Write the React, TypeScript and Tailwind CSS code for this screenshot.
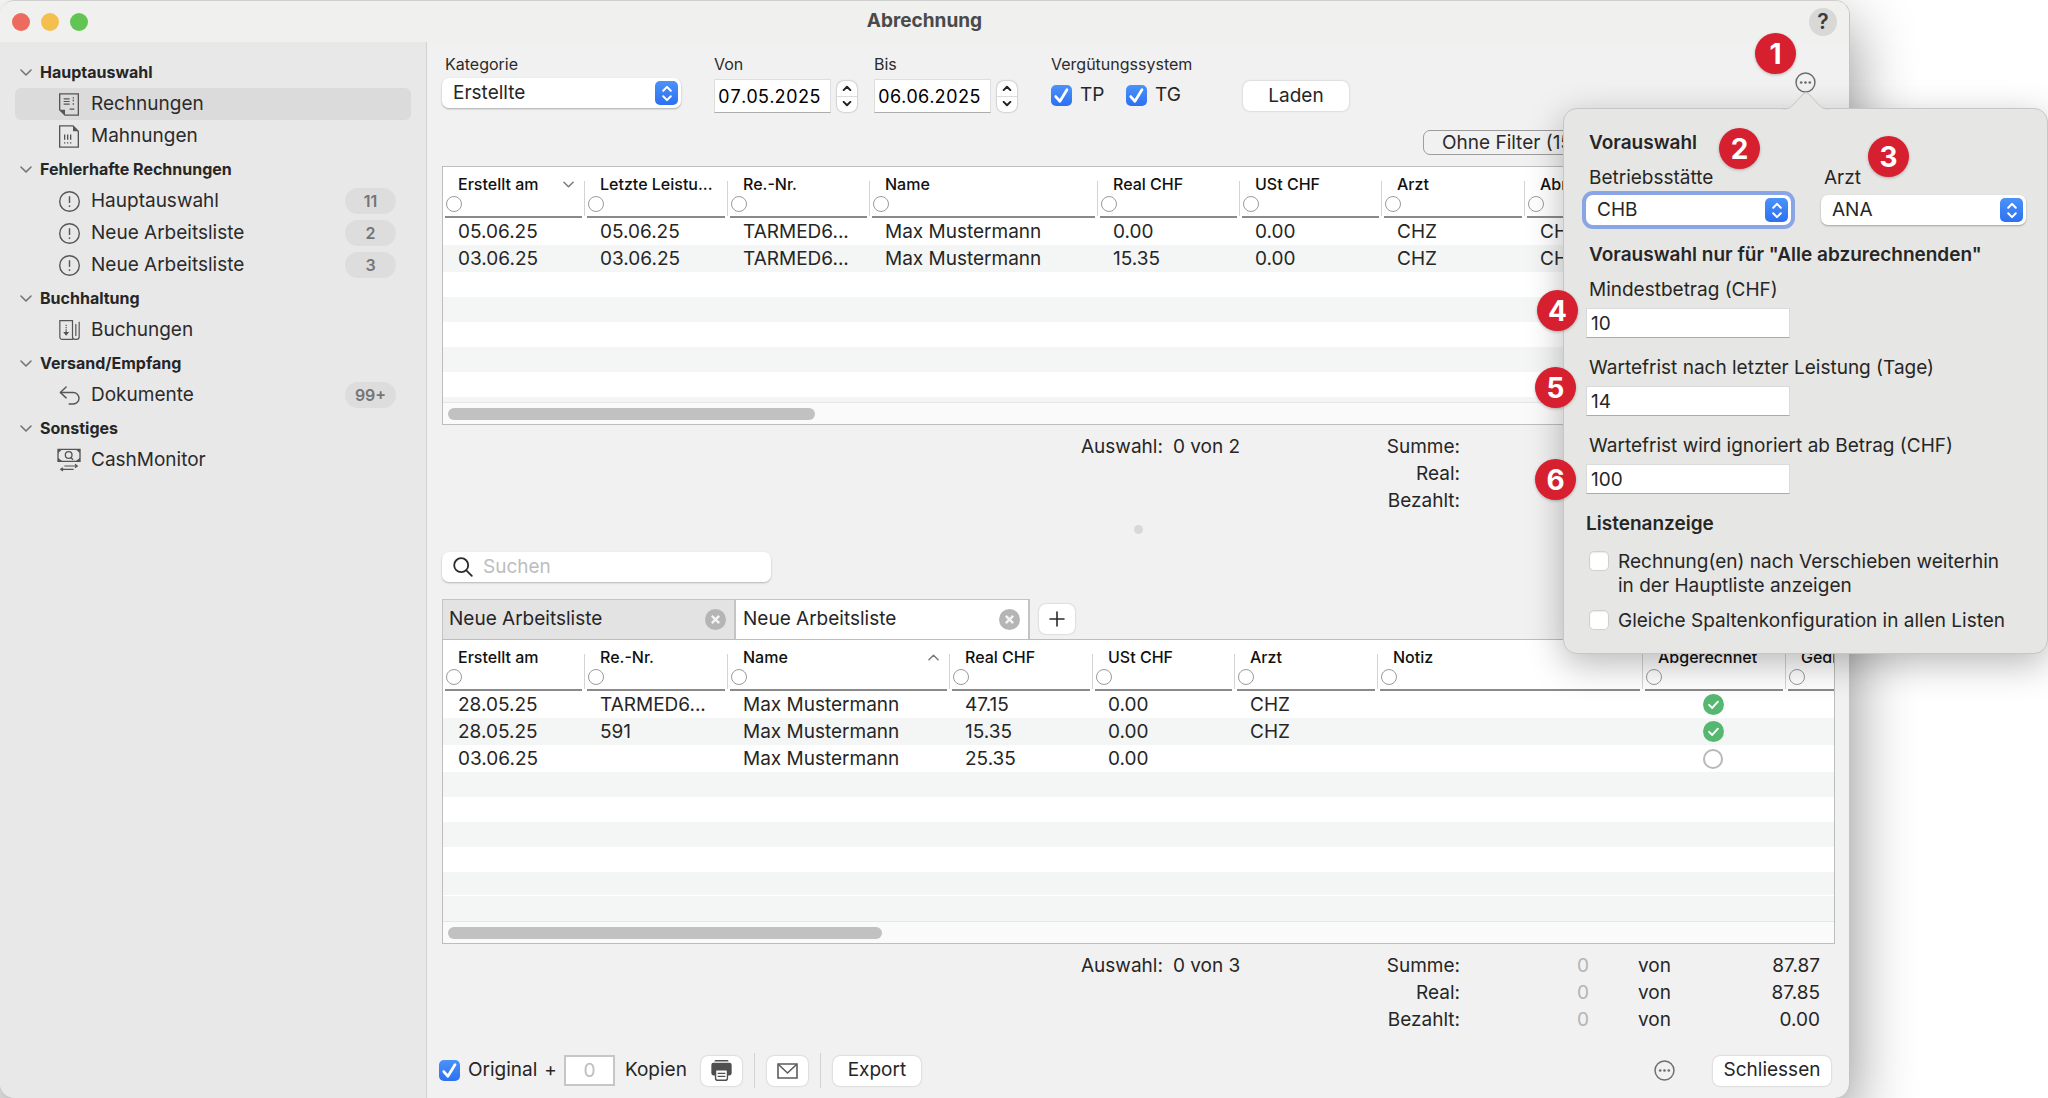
import React from "react";

const ROW_TEXT = "text-[19px] leading-[27px]";

type Column = { label: string; width?: string; sort?: "up" | "down" };

function Chevron({ dir = "down", className = "" }: { dir?: "up" | "down"; className?: string }) {
  return (
    <svg viewBox="0 0 12 7" className={className} fill="none" stroke="currentColor" strokeWidth="1.6" strokeLinecap="round" strokeLinejoin="round" aria-hidden="true">
      <path d={dir === "down" ? "M1 1l5 5 5-5" : "M1 6l5-5 5 5"} />
    </svg>
  );
}

function InvoiceIcon() {
  return (
    <svg viewBox="0 0 60 68" className="h-[23px] w-5" fill="none" stroke="currentColor" strokeWidth="4" aria-hidden="true">
      <path d="M2 50V2h56v64H18z" />
      <path d="M2 50h16v16z" fill="currentColor" stroke="none" />
      <path d="M14 17h18M14 25h18M14 33h18M32 48h14" strokeWidth="3.5" />
      <path d="M43 12v4M43 20v4M43 30v5" strokeWidth="4" />
    </svg>
  );
}

function ReminderIcon() {
  return (
    <svg viewBox="0 0 60 68" className="h-[23px] w-5" fill="none" stroke="currentColor" strokeWidth="4" aria-hidden="true">
      <path d="M42 2H2v64h56V18z" />
      <path d="M42 2v16h16z" fill="currentColor" stroke="none" />
      <path d="M17 28v16M26 28v16M35 28v16" strokeWidth="4" />
      <path d="M17 51v4M26 51v4M35 51v4" strokeWidth="4" />
    </svg>
  );
}

function AlertIcon() {
  return (
    <svg viewBox="0 0 60 60" className="size-[21px]" fill="none" stroke="currentColor" strokeWidth="4" aria-hidden="true">
      <circle cx="30" cy="30" r="28" />
      <path d="M30 15v19" />
      <circle cx="30" cy="43" r="2.6" fill="currentColor" stroke="none" />
    </svg>
  );
}

function BookingIcon() {
  return (
    <svg viewBox="0 0 62 60" className="h-5 w-[21px]" fill="none" stroke="currentColor" strokeWidth="3.6" aria-hidden="true">
      <path d="M42 58H9a7 7 0 0 1-7-7V2h38v48a8 8 0 0 0 8 8h4a8 8 0 0 0 8-8V5" />
      <path d="M50 12v36" />
      <path d="M21 14v4M21 21v4M21 28v4" />
      <path d="M21 33v12" />
      <path d="M12 36l9 11 9-11z" fill="currentColor" stroke="none" />
    </svg>
  );
}

function ReturnIcon() {
  return (
    <svg viewBox="0 0 60 56" className="h-[19px] w-[21px]" fill="none" stroke="currentColor" strokeWidth="4.2" strokeLinecap="round" strokeLinejoin="round" aria-hidden="true">
      <path d="M20 3L3 19l17 16" />
      <path d="M4 19h37a16.500 16.500 0 0 1 0 34H29" />
    </svg>
  );
}

function CashIcon() {
  return (
    <svg viewBox="0 0 72 70" className="h-6 w-6" fill="none" stroke="currentColor" strokeWidth="4" aria-hidden="true">
      <path d="M3 3h66v36H3z" />
      <path d="M3 3h13L3 15zM69 3H56l13 12zM3 39h13L3 28zM69 39H56l13-11z" fill="currentColor" stroke="none" />
      <circle cx="35" cy="20" r="10" />
      <path d="M41 27l7 7" />
      <path d="M22 53h38M54 48l7 5-7 5M50 63H12M18 58l-7 5 7 5" strokeWidth="3.4" />
    </svg>
  );
}

function EllipsisCircle() {
  return (
    <svg viewBox="0 0 20 20" className="size-[21px] text-[#6e6e6e]" aria-hidden="true">
      <circle cx="10" cy="10" r="9" fill="none" stroke="currentColor" strokeWidth="1.4" />
      <circle cx="5.900" cy="10" r="1.300" fill="currentColor" />
      <circle cx="10" cy="10" r="1.300" fill="currentColor" />
      <circle cx="14.100" cy="10" r="1.300" fill="currentColor" />
    </svg>
  );
}

function SideGroup({ title, first = false, children }: { title: string; first?: boolean; children: React.ReactNode }) {
  return (
    <section className={first ? "" : "mt-px"}>
      <h2>
        <button className="flex h-8 items-center gap-2 pl-[5px] text-[16px] font-bold text-[#262626]">
          <Chevron className="h-[7px] w-3 text-[#757575]" />
          {title}
        </button>
      </h2>
      <ul>{children}</ul>
    </section>
  );
}

function SideItem({ icon, label, count, active = false }: { icon: React.ReactNode; label: string; count?: string; active?: boolean }) {
  return (
    <li>
      <a href="#" className={`flex h-8 items-center rounded-md pr-[15px] pl-[42px] text-[19px] text-[#2b2b2b] ${active ? "bg-[#dbdbdb]" : ""}`}>
        <span className="mr-[10px] flex w-6 justify-center text-[#555]">{icon}</span>
        {label}
        {count && (
          <span className="ml-auto flex h-[26px] w-[51px] items-center justify-center rounded-full bg-[#dddddd] text-[16px] font-semibold text-[#757575]">{count}</span>
        )}
      </a>
    </li>
  );
}

function PopupSelect({ id, value, className = "", focused = false }: { id: string; value: string; className?: string; focused?: boolean }) {
  return (
    <div className={`relative ${className}`}>
      <select
        id={id}
        className={`h-[30px] w-full appearance-none rounded-[7px] bg-white pl-[11px] text-[19px] text-[#262626] outline-none ${focused ? "ring-4 ring-[#8aa5e6]" : "shadow-[0_1px_2px_rgba(0,0,0,0.3)]"}`}
      >
        <option>{value}</option>
      </select>
      <span className="pointer-events-none absolute top-[3px] right-[3px] flex h-6 w-[23px] items-center justify-center rounded-[5px] bg-gradient-to-b from-[#4b92f8] to-[#2d70f2]">
        <svg viewBox="0 0 12 18" className="h-[17px] w-3" fill="none" stroke="white" strokeWidth="2.200" strokeLinecap="round" strokeLinejoin="round" aria-hidden="true">
          <path d="M2 6l4-4 4 4M2 12l4 4 4-4" />
        </svg>
      </span>
    </div>
  );
}

function DateField({ id, label, value }: { id: string; label: string; value: string }) {
  return (
    <div>
      <label htmlFor={id} className="block text-[16px] leading-5">{label}</label>
      <div className="mt-1 flex h-9 items-center gap-[6px]">
        <input id={id} defaultValue={value} className="h-[34px] w-[117px] border border-[#dedede] border-b-[#adadad] bg-white pl-[3px] text-[18px] text-black tabular-nums outline-none" />
        <span className="flex h-[31px] w-5 flex-col overflow-hidden rounded-[7px] bg-white shadow-[0_0_2px_rgba(0,0,0,0.4)]">
          <button aria-label={`${label} erhöhen`} className="flex flex-1 items-center justify-center border-b border-[#dcdcdc]">
            <svg viewBox="0 0 12 7" className="h-[6px] w-[10px]" fill="none" stroke="#222" strokeWidth="2.400" strokeLinecap="round" strokeLinejoin="round"><path d="M2 6l4-4 4 4" /></svg>
          </button>
          <button aria-label={`${label} verringern`} className="flex flex-1 items-center justify-center">
            <svg viewBox="0 0 12 7" className="h-[6px] w-[10px]" fill="none" stroke="#222" strokeWidth="2.400" strokeLinecap="round" strokeLinejoin="round"><path d="M2 1l4 4 4-4" /></svg>
          </button>
        </span>
      </div>
    </div>
  );
}

function Check({ label, className = "" }: { label: string; className?: string }) {
  return (
    <label className={`flex items-center gap-2 text-[19px] text-[#262626] ${className}`}>
      <span className="grid size-[21px] place-items-center">
        <input type="checkbox" defaultChecked className="peer col-start-1 row-start-1 size-full appearance-none rounded-[5px] bg-white checked:bg-gradient-to-b checked:from-[#4b92f8] checked:to-[#2d70f2]" />
        <svg viewBox="0 0 20 20" className="pointer-events-none col-start-1 row-start-1 size-full opacity-0 peer-checked:opacity-100" fill="none" stroke="white" strokeWidth="2.600" strokeLinecap="round" strokeLinejoin="round" aria-hidden="true">
          <path d="M4.500 11l4 4.500L15.200 4.500" />
        </svg>
      </span>
      {label}
    </label>
  );
}

function PushButton({ children, className = "", label }: { children: React.ReactNode; className?: string; label?: string }) {
  return (
    <button aria-label={label} className={`flex h-[30px] items-center justify-center rounded-[7px] bg-white text-[19px] text-[#262626] shadow-[0_0_2px_rgba(0,0,0,0.25)] ${className}`}>
      {children}
    </button>
  );
}

function ListTable({ columns, rows, fillers, thumb }: { columns: Column[]; rows: React.ReactNode[][]; fillers: string[]; thumb: string }) {
  return (
    <div className="overflow-hidden border border-[#bdbdbd] bg-white">
      <table className="w-full table-fixed border-collapse">
        <colgroup>
          {columns.map((c, i) => (
            <col key={i} className={c.width} />
          ))}
        </colgroup>
        <thead>
          <tr className="h-[51px]">
            {columns.map((c, i) => (
              <th key={i} className="p-0 text-left align-top font-medium">
                <div className="flex h-[51px]">
                  <div className="ml-[2px] flex min-w-0 flex-1 flex-col border-b-2 border-[#8a8a8a]">
                    <div className="mt-[6px] flex items-center pl-[13px]">
                      <span className="overflow-hidden text-[16px] leading-[22px] whitespace-nowrap text-[#111]">{c.label}</span>
                      {c.sort && <Chevron dir={c.sort} className="mr-2 ml-auto h-[7px] w-[11px] shrink-0 text-[#7a7a7a]" />}
                    </div>
                    <button aria-label={`Filter ${c.label}`} className="mt-px ml-px size-4 rounded-full border border-[#9a9a9a] bg-white" />
                  </div>
                  {i < columns.length - 1 && <span className="mt-[14px] mb-[2px] ml-[2px] w-px bg-[#d4d4d4]" />}
                </div>
              </th>
            ))}
          </tr>
        </thead>
        <tbody>
          {rows.map((r, i) => (
            <tr key={i} className="h-[27px] even:bg-[#f4f5f5]">
              {r.map((cell, j) => (
                <td key={j} className={`overflow-hidden p-0 pl-[15px] text-[#262626] ${ROW_TEXT}`}>
                  <div className="whitespace-nowrap">{cell}</div>
                </td>
              ))}
            </tr>
          ))}
          {fillers.map((f, i) => (
            <tr key={`f${i}`} className={f}>
              <td colSpan={columns.length} className="p-0" />
            </tr>
          ))}
        </tbody>
      </table>
      <div className="flex h-[22px] items-center border-t border-[#e6e6e6] bg-[#fafafa] px-[5px]">
        <div className={`h-3 rounded-full bg-[#c1c1c1] ${thumb}`} />
      </div>
    </div>
  );
}

function Totals({ selection, values }: { selection: string; values?: string[] }) {
  const labels = ["Summe:", "Real:", "Bezahlt:"];
  return (
    <div className={`mt-2 flex justify-end pr-[15px] text-[#262626] ${ROW_TEXT}`}>
      <div className="flex w-[281px] gap-[10px]">
        <span>Auswahl:</span>
        <span>{selection}</span>
      </div>
      <dl className="w-[458px]">
        {labels.map((l, i) => (
          <div key={l} className="grid grid-cols-[98px_129px_82px_149px] text-right">
            <dt>{l}</dt>
            {values && (
              <>
                <dd className="text-[#b4b4b4]">0</dd>
                <dd>von</dd>
                <dd>{values[i]}</dd>
              </>
            )}
          </div>
        ))}
      </dl>
    </div>
  );
}

function ListTab({ active = false }: { active?: boolean }) {
  return (
    <div className={`flex w-[294px] items-center justify-between border-t border-r-2 border-[#c4c4c4] pr-2 ${active ? "bg-white pl-[7px]" : "border-l bg-[#e3e3e3] pl-[6px]"}`}>
      <button className="text-[19px] text-[#262626]">Neue Arbeitsliste</button>
      <button aria-label="Liste schliessen">
        <svg viewBox="0 0 20 20" className="size-[21px]" aria-hidden="true">
          <circle cx="10" cy="10" r="10" fill="#b5b5b5" />
          <path d="M6.500 6.500l7 7M13.500 6.500l-7 7" stroke="#f4f4f4" strokeWidth="2.200" />
        </svg>
      </button>
    </div>
  );
}

function StatusDone() {
  return (
    <svg viewBox="0 0 20 20" className="size-[21px]" aria-label="Abgerechnet">
      <circle cx="10" cy="10" r="10" fill="#56b870" />
      <path d="M5.800 10.300l3 3 5.400-6" fill="none" stroke="white" strokeWidth="1.800" strokeLinecap="round" strokeLinejoin="round" />
    </svg>
  );
}

function StatusOpen() {
  return <span className="block size-5 rounded-full border-2 border-[#b8b8b8] bg-white" />;
}

const Centered = ({ children }: { children: React.ReactNode }) => <div className="flex justify-center pr-[18px]">{children}</div>;

function Marker({ n, className }: { n: number; className: string }) {
  return (
    <span className={`absolute flex size-[41px] items-center justify-center rounded-full bg-[#d6202f] text-[28px] font-bold text-white shadow-[0_1px_3px_rgba(0,0,0,0.25)] ${className}`}>{n}</span>
  );
}

function NumberField({ id, label, value }: { id: string; label: string; value: string }) {
  return (
    <div>
      <label htmlFor={id} className="block pl-[3px] leading-6">{label}</label>
      <input id={id} defaultValue={value} className="mt-[6px] block h-[30px] w-[204px] border border-[#dadada] border-b-[#ababab] bg-white pl-1 text-[19px] outline-none" />
    </div>
  );
}

function OptionRow({ children }: { children: React.ReactNode }) {
  return (
    <label className="flex items-start gap-[9px] pl-[3px] leading-6">
      <input type="checkbox" className="mt-px size-5 shrink-0 appearance-none rounded-[5px] border border-[#d0d0d0] bg-white shadow-[inset_0_1px_1px_rgba(0,0,0,0.08)]" />
      <span>{children}</span>
    </label>
  );
}

function PresetPopover() {
  return (
    <div role="dialog" aria-label="Vorauswahl" className="absolute top-[108px] right-0 z-20 w-[485px] rounded-[14px] border border-[#c6c6c5] bg-[#e6e6e4] pt-[22px] pb-5 pl-[22px] text-[19px] text-[#262626] shadow-[0_10px_36px_rgba(0,0,0,0.28)]">
      <svg viewBox="0 0 46 19" className="absolute -top-[18px] left-[219px] h-[19px] w-[46px]" aria-hidden="true">
        <path d="M0 19C7 18 9 15 12 12L20 3Q23 0 26 3L34 12C37 15 39 18 46 19Z" fill="#e6e6e4" />
        <path d="M0 18C7 18 9 15 12 12L20 3Q23 0 26 3L34 12C37 15 39 18 46 18" fill="none" stroke="#c6c6c5" />
      </svg>
      <h2 className="pl-[3px] leading-6 font-semibold">Vorauswahl</h2>
      <div className="mt-[11px] flex gap-[30px]">
        <div>
          <label htmlFor="site" className="block pl-[3px] leading-6">Betriebsstätte</label>
          <PopupSelect id="site" value="CHB" focused className="mt-[5px] w-[205px]" />
        </div>
        <div>
          <label htmlFor="doctor" className="block pl-[3px] leading-6">Arzt</label>
          <PopupSelect id="doctor" value="ANA" className="mt-[5px] w-[205px]" />
        </div>
      </div>
      <h2 className="mt-[18px] pl-[3px] leading-6 font-semibold">Vorauswahl nur für "Alle abzurechnenden"</h2>
      <div className="mt-[11px] flex flex-col gap-[18px]">
        <NumberField id="min" label="Mindestbetrag (CHF)" value="10" />
        <NumberField id="wait" label="Wartefrist nach letzter Leistung (Tage)" value="14" />
        <NumberField id="ignore" label="Wartefrist wird ignoriert ab Betrag (CHF)" value="100" />
      </div>
      <h2 className="mt-[18px] leading-6 font-semibold">Listenanzeige</h2>
      <div className="mt-[14px] flex flex-col gap-[11px]">
        <OptionRow>
          Rechnung(en) nach Verschieben weiterhin
          <br />
          in der Hauptliste anzeigen
        </OptionRow>
        <OptionRow>Gleiche Spaltenkonfiguration in allen Listen</OptionRow>
      </div>
    </div>
  );
}

const mainColumns: Column[] = [
  { label: "Erstellt am", width: "w-[142px]", sort: "down" },
  { label: "Letzte Leistu...", width: "w-[143px]" },
  { label: "Re.-Nr.", width: "w-[142px]" },
  { label: "Name", width: "w-[228px]" },
  { label: "Real CHF", width: "w-[142px]" },
  { label: "USt CHF", width: "w-[142px]" },
  { label: "Arzt", width: "w-[143px]" },
  { label: "Abr." },
];

const workColumns: Column[] = [
  { label: "Erstellt am", width: "w-[142px]" },
  { label: "Re.-Nr.", width: "w-[143px]" },
  { label: "Name", width: "w-[222px]", sort: "up" },
  { label: "Real CHF", width: "w-[143px]" },
  { label: "USt CHF", width: "w-[142px]" },
  { label: "Arzt", width: "w-[143px]" },
  { label: "Notiz" },
  { label: "Abgerechnet", width: "w-[143px]" },
  { label: "Gedruckt", width: "w-12" },
];

export default function App() {
  return (
    <div className="relative min-h-screen overflow-hidden bg-white pr-[198px] font-['Inter','Liberation_Sans',sans-serif] text-[#2b2b2b]">
      <div className="flex min-h-screen flex-col overflow-hidden rounded-[15px] border-t border-r border-t-[#cfcfcd] border-r-[#c4c4c4] bg-[#f1f1f1] shadow-[0_24px_64px_rgba(0,0,0,0.46)]">
        <header className="flex h-[41px] items-center justify-between bg-[#f0f0ee] pr-3 pl-3">
          <div className="flex w-28 gap-[11px]">
            <button aria-label="Fenster schliessen" className="size-[18px] rounded-full bg-[#ed6a5e]" />
            <button aria-label="Minimieren" className="size-[18px] rounded-full bg-[#f5bf4f]" />
            <button aria-label="Vergrössern" className="size-[18px] rounded-full bg-[#61c554]" />
          </div>
          <h1 className="text-[19px] font-bold text-[#4a4a4a]">Abrechnung</h1>
          <div className="flex w-28 justify-end">
            <button aria-label="Hilfe" className="flex size-7 items-center justify-center rounded-full bg-[#d8d8d6] text-[21px] font-semibold text-[#3c3c3c]">?</button>
          </div>
        </header>

        <div className="flex flex-1">
          <nav className="w-[427px] shrink-0 border-r border-[#d2d2d2] bg-[#e8e8e8] px-[15px] pt-[14px]">
            <SideGroup title="Hauptauswahl" first>
              <SideItem icon={<InvoiceIcon />} label="Rechnungen" active />
              <SideItem icon={<ReminderIcon />} label="Mahnungen" />
            </SideGroup>
            <SideGroup title="Fehlerhafte Rechnungen">
              <SideItem icon={<AlertIcon />} label="Hauptauswahl" count="11" />
              <SideItem icon={<AlertIcon />} label="Neue Arbeitsliste" count="2" />
              <SideItem icon={<AlertIcon />} label="Neue Arbeitsliste" count="3" />
            </SideGroup>
            <SideGroup title="Buchhaltung">
              <SideItem icon={<BookingIcon />} label="Buchungen" />
            </SideGroup>
            <SideGroup title="Versand/Empfang">
              <SideItem icon={<ReturnIcon />} label="Dokumente" count="99+" />
            </SideGroup>
            <SideGroup title="Sonstiges">
              <SideItem icon={<CashIcon />} label="CashMonitor" />
            </SideGroup>
          </nav>

          <main className="flex min-w-0 flex-1 flex-col pr-[14px] pl-[15px]">
            <div className="flex items-start pt-3">
              <div className="w-[272px]">
                <label htmlFor="category" className="block pl-[3px] text-[16px] leading-5">Kategorie</label>
                <PopupSelect id="category" value="Erstellte" className="mt-1 w-[239px]" />
              </div>
              <div className="flex w-[337px] gap-[17px]">
                <DateField id="from" label="Von" value="07.05.2025" />
                <DateField id="to" label="Bis" value="06.06.2025" />
              </div>
              <fieldset>
                <legend className="text-[16px] leading-5">Vergütungssystem</legend>
                <div className="mt-1 flex h-[34px] items-center">
                  <Check label="TP" className="w-[75px]" />
                  <Check label="TG" className="w-[75px]" />
                </div>
              </fieldset>
              <PushButton className="mt-[27px] ml-[42px] w-[106px]">Laden</PushButton>
              <button aria-label="Weitere Optionen" className="mt-[18px] mr-[19px] ml-auto">
                <EllipsisCircle />
              </button>
            </div>

            <div className="mt-4 flex justify-end pr-[252px]">
              <button className="h-[25px] w-[160px] overflow-hidden rounded-[7px] border border-[#9c9c9c] pl-[18px] text-left text-[19px] leading-[23px] whitespace-nowrap">Ohne Filter (15)</button>
            </div>

            <div className="mt-[11px]">
              <ListTable
                columns={mainColumns}
                rows={[
                  ["05.06.25", "05.06.25", "TARMED6...", "Max Mustermann", "0.00", "0.00", "CHZ", "CHZ"],
                  ["03.06.25", "03.06.25", "TARMED6...", "Max Mustermann", "15.35", "0.00", "CHZ", "CHZ"],
                ]}
                fillers={["h-[25px]", "h-[25px] bg-[#f4f5f5]", "h-[25px]", "h-[25px] bg-[#f4f5f5]", "h-[25px]", "h-[5px] bg-[#f4f5f5]"]}
                thumb="w-[367px]"
              />
            </div>
            <Totals selection="0 von 2" />

            <div className="mt-[11px] size-[9px] self-center rounded-full bg-[#d8d8d8]" />

            <label className="mt-[18px] flex h-[30px] w-[329px] items-center rounded-[7px] bg-white pl-[11px] shadow-[0_1px_2px_rgba(0,0,0,0.25)]">
              <svg viewBox="0 0 20 20" className="size-[20px] shrink-0" fill="none" stroke="#2b2b2b" strokeWidth="1.800" strokeLinecap="round" aria-hidden="true">
                <circle cx="8.200" cy="8.200" r="7" />
                <path d="M13.300 13.300L18.800 18.800" />
              </svg>
              <input type="search" aria-label="Suchen" placeholder="Suchen" className="ml-[10px] w-full bg-transparent text-[19px] outline-none placeholder:text-[#bdbdbd]" />
            </label>

            <div className="mt-[17px] flex h-10">
              <ListTab />
              <ListTab active />
              <PushButton label="Neue Liste" className="mt-[5px] ml-[9px] w-9">
                <svg viewBox="0 0 16 16" className="size-4" stroke="#2b2b2b" strokeWidth="1.600" strokeLinecap="round" aria-hidden="true"><path d="M8 1v14M1 8h14" /></svg>
              </PushButton>
            </div>
            <ListTable
              columns={workColumns}
              rows={[
                ["28.05.25", "TARMED6...", "Max Mustermann", "47.15", "0.00", "CHZ", "", <Centered><StatusDone /></Centered>, ""],
                ["28.05.25", "591", "Max Mustermann", "15.35", "0.00", "CHZ", "", <Centered><StatusDone /></Centered>, ""],
                ["03.06.25", "", "Max Mustermann", "25.35", "0.00", "", "", <Centered><StatusOpen /></Centered>, ""],
              ]}
              fillers={["h-[25px] bg-[#f4f5f5]", "h-[25px]", "h-[25px] bg-[#f4f5f5]", "h-[25px]", "h-[23px] bg-[#f4f5f5]", "h-px", "h-[25px] bg-[#f4f5f5]"]}
              thumb="w-[434px]"
            />
            <Totals selection="0 von 3" values={["87.87", "87.85", "0.00"]} />

            <footer className="mt-auto flex items-center pb-[10px] text-[19px] text-[#262626]">
              <Check label="Original" className="-ml-[3px]" />
              <span className="mx-[7px]">+</span>
              <input aria-label="Anzahl Kopien" defaultValue="0" className="h-[31px] w-[51px] border-2 border-[#c6c6c6] bg-white text-center text-[#bdbdbd] outline-none" />
              <span className="ml-[10px] w-[76px]">Kopien</span>
              <PushButton label="Drucken" className="w-[41px]">
                <svg viewBox="0 0 60 60" className="size-[21px]" aria-hidden="true">
                  <path d="M10 3q1-3 4-3h32q3 0 4 3v1H10z" fill="#4f4f4f" />
                  <path d="M7 8h46q6 0 6 6v24q0 6-6 6h-6V30H13v14H7q-6 0-6-6V14q0-6 6-6z" fill="#4f4f4f" />
                  <path d="M13 28h34v24q0 6-6 6H19q-6 0-6-6z" fill="white" stroke="#4f4f4f" strokeWidth="4" />
                  <path d="M19 38h22M19 47h22" stroke="#4f4f4f" strokeWidth="3.500" />
                </svg>
              </PushButton>
              <span className="mx-3 h-[35px] w-px bg-[#d2d2d2]" />
              <PushButton label="Per E-Mail senden" className="w-[41px]">
                <svg viewBox="0 0 21 16" className="h-4 w-[21px]" fill="none" stroke="#5c5c5c" strokeWidth="1.600" aria-hidden="true">
                  <path d="M1 1h19v14H1z" />
                  <path d="M1.500 1.500l9 8.500 9-8.500" />
                </svg>
              </PushButton>
              <span className="mx-3 h-[35px] w-px bg-[#d2d2d2]" />
              <PushButton className="w-[88px]">Export</PushButton>
              <button aria-label="Weitere Aktionen" className="mr-[38px] ml-auto">
                <EllipsisCircle />
              </button>
              <PushButton className="mr-1 w-[118px]">Schliessen</PushButton>
            </footer>
          </main>
        </div>
      </div>

      <PresetPopover />
      <div className="absolute top-0 right-0 z-30">
        <Marker n={1} className="top-[33px] right-[252px]" />
        <Marker n={2} className="top-[128px] right-[288px]" />
        <Marker n={3} className="top-[136px] right-[139px]" />
        <Marker n={4} className="top-[290px] right-[470px]" />
        <Marker n={5} className="top-[367px] right-[472px]" />
        <Marker n={6} className="top-[459px] right-[472px]" />
      </div>
    </div>
  );
}
